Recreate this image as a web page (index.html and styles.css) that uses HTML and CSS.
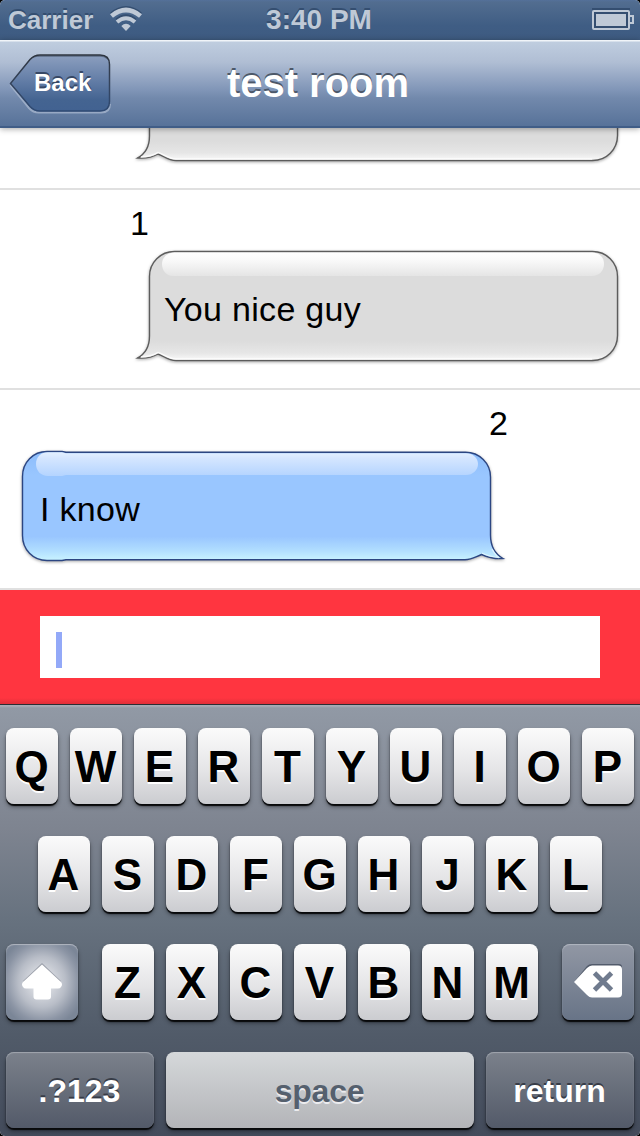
FILE: index.html
```html
<!DOCTYPE html>
<html lang="en">
<head>
<meta charset="utf-8">
<title>test room</title>
<link rel="stylesheet" href="styles.css">
</head>
<body>
<svg class="defs" width="0" height="0" aria-hidden="true">
  <defs>
    <linearGradient id="grayFill" x1="0" y1="0" x2="0" y2="1">
      <stop offset="0" stop-color="#dcdcdc"/><stop offset=".82" stop-color="#dcdcdc"/><stop offset=".93" stop-color="#e6e6e6"/><stop offset="1" stop-color="#fafafa"/>
    </linearGradient>
    <linearGradient id="grayGloss" x1="0" y1="0" x2="0" y2="1">
      <stop offset="0" stop-color="#fff"/><stop offset=".3" stop-color="#fafafa"/><stop offset="1" stop-color="#e5e5e5"/>
    </linearGradient>
    <linearGradient id="blueFill" x1="0" y1="0" x2="0" y2="1">
      <stop offset="0" stop-color="#8dbdfb"/><stop offset=".22" stop-color="#99c6ff"/><stop offset=".78" stop-color="#99c6ff"/><stop offset=".9" stop-color="#afdcff"/><stop offset="1" stop-color="#c9f4ff"/>
    </linearGradient>
    <linearGradient id="blueGloss" x1="0" y1="0" x2="0" y2="1">
      <stop offset="0" stop-color="#e4f0ff"/><stop offset=".25" stop-color="#d5e6ff"/><stop offset="1" stop-color="#b4d4ff"/>
    </linearGradient>
    <linearGradient id="backFill" x1="0" y1="0" x2="0" y2="1">
      <stop offset="0" stop-color="#8c9fbf"/><stop offset=".5" stop-color="#5f7aa4"/><stop offset=".8" stop-color="#446491"/><stop offset="1" stop-color="#426291"/>
    </linearGradient>
    <linearGradient id="backEdge" x1="0" y1="0" x2="0" y2="1">
      <stop offset="0" stop-color="#2f3640"/><stop offset=".5" stop-color="#34435b"/><stop offset="1" stop-color="#2f4a73"/>
    </linearGradient>
    <g id="grayBubble">
      <path class="bubble-shadow" fill="url(#grayFill)" stroke="#5c5c5c" stroke-width="1.4" d="M44.5 6.5H462.500C476.500 6.500 487.500 17.500 487.500 31.500V90.500C487.500 104.500 476.500 115.500 462.500 115.500H46C38 115.500 34 111 28 109C22 112.500 14 113.500 7.500 113C15 109 19.500 101 19.500 91V31.500C19.500 17.500 30.500 6.500 44.500 6.500Z"/>
      <path fill="none" stroke="#fff" stroke-opacity=".75" stroke-width="1.500" d="M11 112C17 112 23 110.500 28 107.500C34 109.500 39 114 46 114H462"/>
      <path fill="url(#grayGloss)" d="M44.500 7.500H462C469 7.500 474 12 474 19S469 31 462 31H43C36 31 32 25 32 19C32 13 37 7.500 44.500 7.500Z"/>
    </g>
  </defs>
</svg>

<div class="phone">
  <header class="status">
    <div class="carrier">
      <span>Carrier</span>
      <svg class="wifi" width="34" height="26" viewBox="0 0 34 26">
        <g fill="none" stroke="#344e70" stroke-width="4.600" transform="translate(0 -1.500)"><path d="M2.500 10Q17 -2 31.500 10"/><path d="M8 16Q17 8.500 26 16"/></g>
        <g fill="none" stroke="#bfc9d6" stroke-width="4.600"><path d="M2.500 10Q17 -2 31.500 10"/><path stroke-width="4" d="M8 16Q17 8.500 26 16"/></g>
        <path fill="#bfc9d6" d="M12.300 20Q17 15.500 21.700 20L17 25Z"/>
      </svg>
    </div>
    <span class="time">3:40 PM</span>
    <svg class="battery" width="43" height="22" viewBox="0 0 43 22">
      <path d="M1 1H38V4" fill="none" stroke="#344e70" stroke-width="2"/>
      <rect x="2" y="3" width="36" height="18" rx="1" fill="#344e70" stroke="#bfc9d6" stroke-width="2"/>
      <path d="M39 8H42V15H39" fill="none" stroke="#bfc9d6" stroke-width="2"/>
      <rect x="5" y="6" width="30" height="12" fill="#bfc9d6"/>
    </svg>
  </header>

  <nav class="nav">
    <a class="back">
      <svg width="104" height="64" viewBox="0 0 104 64">
        <path fill="none" stroke="#a9b8cf" stroke-width="2" stroke-opacity=".75" d="M1.500 33L20 56Q24 60.500 30 60.500H92Q101 60.500 101 52"/>
        <path fill="url(#backFill)" stroke="url(#backEdge)" stroke-width="1.500" d="M1.500 31.500L21 7.500Q25 3 31 3H91Q100.500 3 100.500 12.500V49.500Q100.500 59 91 59H31Q25 59 21 54.500Z"/>
        <path fill="none" stroke="#28313e" stroke-opacity=".45" stroke-width="1.500" d="M24 5Q27 4 31 4H91Q96 4 98 6.500"/>
      </svg>
      <span>Back</span>
    </a>
    <h1>test room</h1>
  </nav>

  <main class="chat">
    <section class="row from-other">
      <span class="author"></span>
      <div class="bubble"><svg width="500" height="120" viewBox="0 0 500 120"><use href="#grayBubble"/></svg></div>
    </section>
    <section class="row from-other">
      <span class="author">1</span>
      <div class="bubble"><svg width="500" height="120" viewBox="0 0 500 120"><use href="#grayBubble"/></svg><p>You nice guy</p></div>
    </section>
    <section class="row from-me">
      <span class="author">2</span>
      <div class="bubble">
        <svg width="500" height="120" viewBox="0 0 500 120">
          <path class="bubble-shadow" fill="url(#blueFill)" stroke="#2c4682" stroke-width="1.400" d="M35 6.500H50L54 7.300H453.500C467.500 7.300 478.500 18.500 478.500 32V90C478.500 102 483 109 491 113.500C483 114 476 112.500 469.500 109.500C463 112 460 114.700 453 114.700H54L50 115.500H35C21 115.500 10.500 104.500 10.500 90.500V31.500C10.500 17.500 21 6.500 35 6.500Z"/>
          <path fill="none" stroke="#e8faff" stroke-opacity=".75" stroke-width="1.300" d="M480 104Q484 111 487 112.500Q477 112 470 108"/>
          <path fill="url(#blueGloss)" d="M36 7.300H50L54 8.200H454C461 8.200 466 13 466 19S461 30 454 30H54L50 31H36C29 31 24 26 24 19S29 7.300 36 7.300Z"/>
        </svg>
        <p>I know</p>
      </div>
    </section>
  </main>

  <div class="composer"><div class="field"><span class="caret"></span></div></div>

  <div class="keyboard">
    <div class="keys"><b class="key">Q</b><b class="key">W</b><b class="key">E</b><b class="key">R</b><b class="key">T</b><b class="key">Y</b><b class="key">U</b><b class="key">I</b><b class="key">O</b><b class="key">P</b></div>
    <div class="keys"><b class="key">A</b><b class="key">S</b><b class="key">D</b><b class="key">F</b><b class="key">G</b><b class="key">H</b><b class="key">J</b><b class="key">K</b><b class="key">L</b></div>
    <div class="keys spread">
      <b class="key fn shift">
        <svg width="44" height="40" viewBox="0 0 44 40">
          <path fill="#7d828d" d="M22 0L41 18L38 21L22 6L6 21L3 18Z" opacity=".6"/>
          <path fill="#fff" d="M22 1.500L41 19Q43 21.500 41 24Q40 25.500 38 25.500H31V33.500Q31 36.500 28 36.500H16.500Q13.500 36.500 13.500 33.500V25.500H6Q4 25.500 3 24Q1 21.500 3 19Z"/>
        </svg>
      </b>
      <div class="keys"><b class="key">Z</b><b class="key">X</b><b class="key">C</b><b class="key">V</b><b class="key">B</b><b class="key">N</b><b class="key">M</b></div>
      <b class="key fn delete">
        <svg width="50" height="36" viewBox="0 0 50 36">
          <path fill="#525b6b" d="M1 18L14 2Q16 0 19 0H46Q49 0 49 3V8H14Z"/>
          <path fill="#fff" d="M1 18L14 4Q16.500 1.500 19 1.500H45Q49 1.500 49 5.500V29.500Q49 33.500 45 33.500H19Q16.500 33.500 14 31Z"/>
          <path stroke="#707b8e" stroke-width="4.800" d="M21.500 9L38.500 26M38.500 9L21.500 26"/>
        </svg>
      </b>
    </div>
    <div class="keys">
      <b class="key fn wide">.?123</b><b class="key space">space</b><b class="key fn wide">return</b>
    </div>
  </div>
</div>
</body>
</html>
```
FILE: styles.css
```css
* { box-sizing: border-box; }
body {
  margin: 0;
  background: #000;
  font-family: "Liberation Sans", Arial, sans-serif;
}
.defs { position: absolute; }
.phone {
  display: flex;
  flex-direction: column;
  width: 640px;
  height: 1136px;
  overflow: hidden;
  border-radius: 5px;
  background: #fff;
}

/* status bar */
.status {
  display: grid;
  grid-template-columns: 1fr auto 1fr;
  align-items: center;
  height: 40px;
  padding: 0 6px 0 8px;
  background: linear-gradient(#54709a, #526d90 5%, #3f5d84 65%, #3e5b81);
  color: #bfc9d6;
  font-weight: bold;
  font-size: 28px;
  line-height: 38px;
  text-shadow: 0 -2px 0 #344e70;
}
.carrier { display: flex; align-items: center; gap: 16px; font-size: 26px; }
.wifi { margin-top: -2px; }
.time { padding-right: 4px; }
.battery { justify-self: end; margin-top: -3px; }

/* navigation bar */
.nav {
  display: grid;
  grid-template-columns: 1fr auto 1fr;
  align-items: center;
  height: 88px;
  padding: 0 9px;
  background: linear-gradient(#f0f4f8 0 1px, #bfcddf 2px, #b0bed4 22px, #8095b7 50px, #7289ac 58px, #577299 86px, #405d87 86px);
  color: #fff;
  z-index: 1;
  box-shadow: 0 1px 6px rgba(0, 0, 0, .35);
}
.nav h1 {
  margin: 0 0 3px;
  padding-right: 4px;
  font-size: 40px;
  line-height: 44px;
  text-shadow: 0 -2px 0 #4c5869;
}
.back { display: grid; align-items: center; justify-items: start; }
.back svg, .back span { grid-area: 1 / 1; }
.back span {
  padding: 0 0 3px 25px;
  font-size: 24px;
  font-weight: bold;
  line-height: 28px;
  text-shadow: 0 -2px 0 #374865;
}

/* messages */
.chat {
  display: flex;
  flex-direction: column;
  justify-content: flex-end;
  height: 462px;
  overflow: hidden;
  font-size: 34px;
}
.row {
  display: flex;
  flex: none;
  flex-direction: column;
  height: 200px;
  border-bottom: 2px solid #e0e0e0;
}
.author { padding-top: 12px; height: 55px; line-height: 43px; }
.from-other { padding-left: 130px; }
.from-me { padding-left: 12px; }
.from-me .author { padding-left: 477px; }
.bubble { display: grid; width: 500px; height: 120px; }
.bubble > * { grid-area: 1 / 1; }
.bubble p { margin: 0; padding: 43px 0 0 34px; line-height: 43px; letter-spacing: .3px; }
.from-me .bubble p { padding-left: 28px; }
.bubble-shadow { filter: drop-shadow(0 1.5px 1.5px rgba(0, 0, 0, .35)); }

/* composer */
.composer {
  height: 114px;
  padding: 26px 40px;
  background: linear-gradient(#ff3540 0 108px, #e02f39 114px);
}
.field { height: 62px; padding: 16px; background: #fff; }
.caret { display: block; width: 6px; height: 36px; background: #93a9f8; }

/* keyboard */
.keyboard {
  display: flex;
  flex-direction: column;
  align-items: center;
  gap: 32px;
  height: 432px;
  padding: 24px 6px 0;
  background: linear-gradient(#292d33 0 1px, #a5abb5 1px 2px, #9199a5 4px, #7e8490 125px, #67727f 215px, #515b69 330px, #434b5b);
}
.keys { display: flex; gap: 12px; }
.spread { align-self: stretch; justify-content: space-between; }
.key {
  display: flex;
  align-items: center;
  justify-content: center;
  width: 52px;
  height: 76px;
  padding: 2px 1px 0 0;
  border-radius: 8px;
  background: linear-gradient(#fbfbfb, #e5e5e7 55%, #cbccd0);
  box-shadow: 0 2px 1px #08090b, 0 3px 4px rgba(0, 0, 0, .4);
  color: #000;
  font-size: 44px;
  line-height: 50px;
  text-shadow: 0 2px 0 #fff;
}
.fn { color: #fff; text-shadow: 0 -2px 0 #373c47; }
.shift, .delete { width: 72px; padding: 0; }
.shift {
  padding-top: 2px;
  background: radial-gradient(ellipse 43px 46px at center, #e0e2e7 15%, #b8bdc7 55%, #8b94a4 85%, #7b8697);
  box-shadow: inset 0 1px 1px #b1b6c0, 0 2px 1px #08090b, 0 3px 4px rgba(0, 0, 0, .4);
}
.delete {
  background: linear-gradient(#9197a4, #687487);
  box-shadow: inset 0 1px 1px #b1b6c0, 0 2px 1px #08090b, 0 3px 4px rgba(0, 0, 0, .4);
}
.wide, .space { font-size: 32px; }
.wide {
  width: 148px;
  background: linear-gradient(#7b818b, #535a69);
  box-shadow: inset 0 1px 1px #a1a6af, 0 2px 1px #08090b, 0 3px 4px rgba(0, 0, 0, .4);
}
.space {
  width: 308px;
  background: linear-gradient(#d5d8da, #b3b4b8);
  color: #55606e;
  letter-spacing: -.2px;
  text-shadow: 0 2px 0 #ececef;
}
```
